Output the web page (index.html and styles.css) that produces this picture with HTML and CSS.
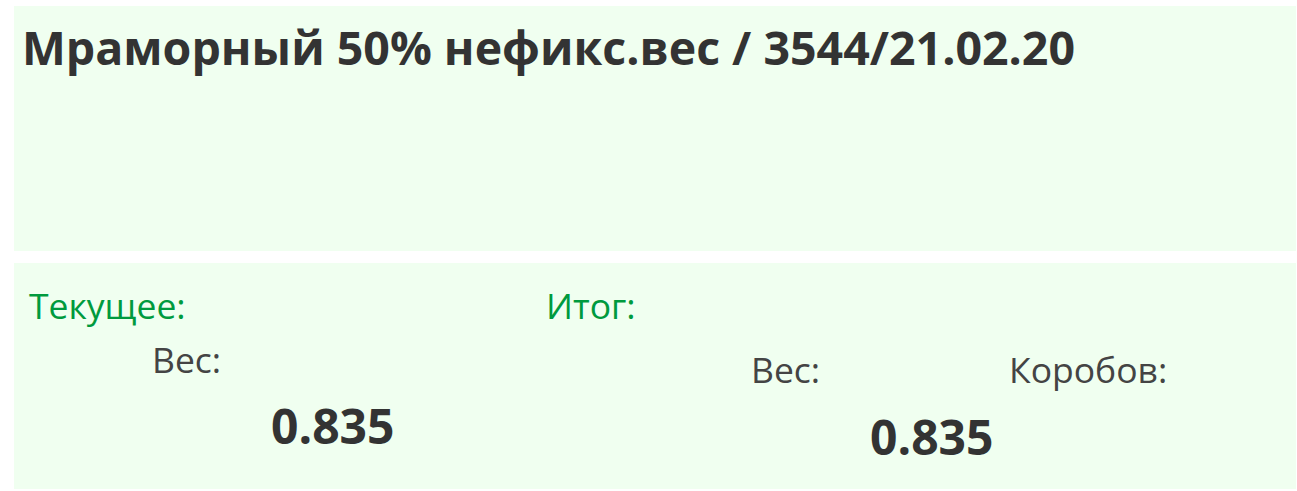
FILE: index.html
```html
<!DOCTYPE html>
<html lang="ru">
<head>
<meta charset="utf-8">
<title>Мраморный</title>
<link rel="stylesheet" href="styles.css">
</head>
<body>
<div class="page">
  <section class="head">
    <h1 class="title">Мраморный 50% нефикс.вес / 3544/21.02.20</h1>
  </section>
  <section class="stats">
    <div class="col col-current">
      <div class="section-label">Текущее:</div>
      <div class="field-label cur-label">Вес:</div>
      <div class="value cur-value">0.835</div>
    </div>
    <div class="col col-total">
      <div class="section-label">Итог:</div>
      <div class="total-labels">
        <div class="field-label tot-weight">Вес:</div>
        <div class="field-label tot-boxes">Коробов:</div>
      </div>
      <div class="value tot-value">0.835</div>
    </div>
  </section>
</div>
</body>
</html>
```

FILE: styles.css
```css
html, body {
  margin: 0;
  padding: 0;
  background: #ffffff;
}
body {
  font-family: "Open Sans", "Noto Sans", sans-serif;
  color: #333333;
}
.page {
  padding: 6px 1px 0 14px;
  display: flex;
  flex-direction: column;
  gap: 12px;
}
.head {
  background: #f0fff0;
  height: 245px;
  padding: 0 8px;
  box-sizing: border-box;
}
.title {
  margin: 0;
  padding-top: 11px;
  font-size: 46.5px;
  line-height: 60px;
  font-weight: 700;
  color: #333333;
  white-space: nowrap;
}
.stats {
  background: #f0fff0;
  height: 226px;
  box-sizing: border-box;
  padding-top: 18px;
  display: grid;
  grid-template-columns: 517px 1fr;
}
.col {
  display: flex;
  flex-direction: column;
  align-items: flex-start;
}
.section-label {
  color: #009a3e;
  font-size: 35.5px;
  line-height: 49px;
  padding-left: 15px;
}
.field-label {
  color: #444444;
  font-size: 35.5px;
  line-height: 49px;
}
.value {
  font-weight: 700;
  font-size: 48px;
  line-height: 62px;
  color: #333333;
}
.cur-label {
  margin-top: 5px;
  margin-left: 138px;
}
.cur-value {
  margin-top: 11px;
  margin-left: 257px;
}
.total-labels {
  display: flex;
  margin-top: 15px;
  padding-left: 220px;
}
.tot-weight {
  width: 258px;
}
.tot-value {
  margin-top: 12px;
  margin-left: 339px;
}
```
